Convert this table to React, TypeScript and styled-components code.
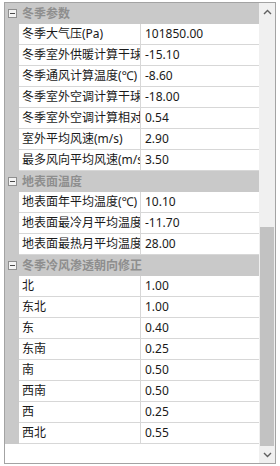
import styled, { createGlobalStyle } from "styled-components";

const GlobalStyle = createGlobalStyle`
  html, body {
    margin: 0;
    padding: 0;
    background: #ffffff;
  }
  body {
    font-family: "Noto Sans", "Noto Sans CJK SC", sans-serif;
    font-size: 12px;
    color: #1a1a1a;
  }
`;

type Prop = { name: string; value: string };
type Category = { title: string; props: Prop[] };

const categories: Category[] = [
  {
    title: "冬季参数",
    props: [
      { name: "冬季大气压(Pa)", value: "101850.00" },
      { name: "冬季室外供暖计算干球温度(℃)", value: "-15.10" },
      { name: "冬季通风计算温度(℃)", value: "-8.60" },
      { name: "冬季室外空调计算干球温度(℃)", value: "-18.00" },
      { name: "冬季室外空调计算相对湿度", value: "0.54" },
      { name: "室外平均风速(m/s)", value: "2.90" },
      { name: "最多风向平均风速(m/s)", value: "3.50" },
    ],
  },
  {
    title: "地表面温度",
    props: [
      { name: "地表面年平均温度(℃)", value: "10.10" },
      { name: "地表面最冷月平均温度(℃)", value: "-11.70" },
      { name: "地表面最热月平均温度(℃)", value: "28.00" },
    ],
  },
  {
    title: "冬季冷风渗透朝向修正",
    props: [
      { name: "北", value: "1.00" },
      { name: "东北", value: "1.00" },
      { name: "东", value: "0.40" },
      { name: "东南", value: "0.25" },
      { name: "南", value: "0.50" },
      { name: "西南", value: "0.50" },
      { name: "西", value: "0.25" },
      { name: "西北", value: "0.55" },
    ],
  },
];

const Chevron = ({ up }: { up?: boolean }) => (
  <svg width="9" height="6" viewBox="0 0 9 6">
    <polyline
      points={up ? "1,5 4.5,1.5 8,5" : "1,1 4.5,4.5 8,1"}
      fill="none"
      stroke="#606060"
      strokeWidth="1.4"
    />
  </svg>
);

const PropertyGrid = () => {
  return (
    <Panel>
      <GlobalStyle />
      <Grid>
        {categories.map((cat) => (
          <div key={cat.title}>
            <CategoryRow>
              <GutterCell>
                <Expander />
              </GutterCell>
              <CategoryLabel>{cat.title}</CategoryLabel>
            </CategoryRow>
            {cat.props.map((p) => (
              <PropRow key={p.name}>
                <GutterCell />
                <NameCell>{p.name}</NameCell>
                <ValueCell>{p.value}</ValueCell>
              </PropRow>
            ))}
          </div>
        ))}
      </Grid>
      <ScrollBar>
        <ArrowButton>
          <Chevron up />
        </ArrowButton>
        <Track>
          <Thumb />
        </Track>
        <ArrowButton>
          <Chevron />
        </ArrowButton>
      </ScrollBar>
    </Panel>
  );
};

const Panel = styled.div`
  margin: 2px 0 0 4px;
  width: 272px;
  height: 462px;
  box-sizing: border-box;
  border: 1px solid #a3a3a3;
  display: flex;
  background: #ffffff;
  overflow: hidden;
`;

const Grid = styled.div`
  flex: 1;
  display: flex;
  flex-direction: column;
`;

const CategoryRow = styled.div`
  display: grid;
  grid-template-columns: 14px 1fr;
  height: 21px;
  background: #c9c9c9;
`;

const GutterCell = styled.div`
  background: #c9c9c9;
  display: flex;
  align-items: center;
  justify-content: center;
`;

const Expander = styled.div`
  position: relative;
  width: 9px;
  height: 9px;
  box-sizing: border-box;
  border: 1px solid #8f8f8f;
  background: #f4f4f4;

  &::after {
    content: "";
    position: absolute;
    left: 1px;
    right: 1px;
    top: 3px;
    height: 1px;
    background: #4a4a4a;
  }
`;

const CategoryLabel = styled.div`
  padding-left: 3px;
  line-height: 21px;
  color: #8e8e8e;
  font-weight: bold;
  white-space: nowrap;
  overflow: hidden;
`;

const PropRow = styled.div`
  display: grid;
  grid-template-columns: 14px 122px 1fr;
  height: 21px;
`;

const NameCell = styled.div`
  padding-left: 3px;
  line-height: 20px;
  border-bottom: 1px solid #d7d7d7;
  border-right: 1px solid #d7d7d7;
  white-space: nowrap;
  overflow: hidden;
`;

const ValueCell = styled.div`
  padding-left: 4px;
  line-height: 20px;
  border-bottom: 1px solid #d7d7d7;
  white-space: nowrap;
  overflow: hidden;
`;

const ScrollBar = styled.div`
  width: 16px;
  display: flex;
  flex-direction: column;
  background: #f0f0f0;
`;

const ArrowButton = styled.div`
  height: 17px;
  display: flex;
  align-items: center;
  justify-content: center;
`;

const Track = styled.div`
  flex: 1;
  display: flex;
  flex-direction: column;
  justify-content: flex-end;
  padding: 0 1px;
`;

const Thumb = styled.div`
  height: 219px;
  background: #c2c2c2;
`;

export default function App() {
  return <PropertyGrid />;
}
